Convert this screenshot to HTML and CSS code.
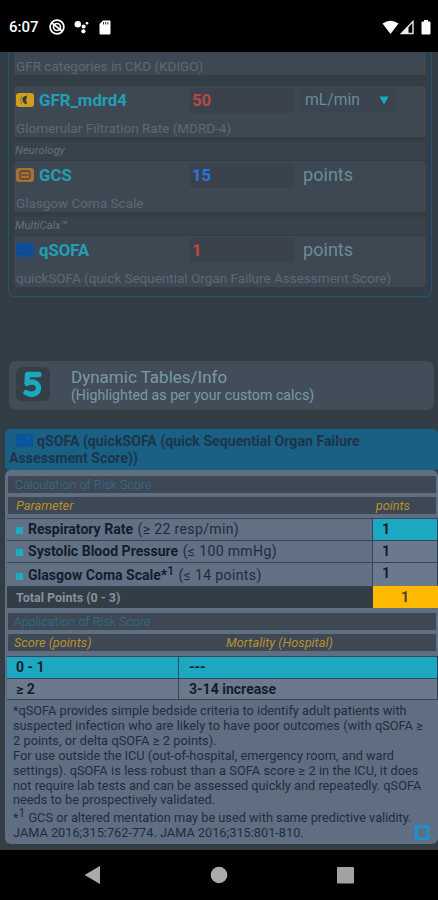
FILE: index.html
```html
<!DOCTYPE html>
<html lang="en">
<head>
<title>Custom Calcs</title>
<meta charset="UTF-8">
<meta name="viewport" content="width=device-width,initial-scale=1.0">
<link rel="stylesheet" href="styles.css">
</head>
<body>
<header class="status">
	<span class="time">6:07</span>
	<svg class="ico-sync" width="16" height="16" viewBox="0 0 16 16" fill="none" stroke="#fff"><circle cx="8" cy="8" r="6.9" stroke-width="1.7"/><circle cx="8" cy="8" r="3.5" stroke-width="1.7"/><path d="M3 4l10 8" stroke-width="1.7"/></svg>
	<svg class="ico-dots" width="15" height="14" viewBox="0 0 15 14" fill="#fff"><circle cx="3.8" cy="4.3" r="3.2"/><circle cx="9.6" cy="6.5" r="2"/><circle cx="9.4" cy="11.3" r="2.1"/><circle cx="13" cy="3.2" r="1.3"/></svg>
	<svg class="ico-sd" width="12" height="15" viewBox="0 0 12 15"><path d="M4 .5h6.5a1 1 0 0 1 1 1v12a1 1 0 0 1-1 1h-9a1 1 0 0 1-1-1V4z" fill="#fff"/><path d="M4.5 2v2.5M6.7 2v2.5M8.9 2v2.5" stroke="#333" stroke-width="1"/></svg>
	<span class="spacer"></span>
	<svg width="17" height="15" viewBox="0 0 17 15"><path d="M.5 3.5Q8.500-2 16.500 3.500L8.500 14z" fill="#fff"/></svg>
	<svg class="ico-cell" width="14" height="15" viewBox="0 0 14 15"><path d="M1.500 13.500L13 1.500v12z" fill="none" stroke="#ddd" stroke-width="1.500"/><path d="M.5 14L8.500 6v8z" fill="#eee"/></svg>
	<svg class="ico-batt" width="10" height="15" viewBox="0 0 10 15"><path d="M3 0h4v1.500h1.500a1 1 0 0 1 1 1V13.500a1 1 0 0 1-1 1h-7a1 1 0 0 1-1-1V2.500a1 1 0 0 1 1-1H3z" fill="#fff"/></svg>
</header>

<main>
	<section class="panel">
		<div class="card card-cut"><p class="desc">GFR categories in CKD (KDIGO)</p></div>
		<div class="card first">
			<div class="line">
				<svg class="badge" width="18" height="14" viewBox="0 0 18 14"><rect width="18" height="14" rx="3" fill="#cfa11b"/><path d="M5.500 3Q4 7 5.500 11" fill="none" stroke="#8a7430"/><path d="M12 2.500Q5.500 3 6.500 7Q7 11 12 11.500Q9.500 10 11 8.500L9.500 7L11 5.500Q9.500 4 12 2.500z" fill="#303a44"/></svg>
				<b class="name">GFR_mdrd4</b>
				<span class="value red">50</span>
				<span class="unit select"><span>mL/min</span><svg width="10" height="9" viewBox="0 0 10 9"><path d="M.5.500h9L5 8.500z" fill="#1ba9c0"/></svg></span>
			</div>
			<p class="desc">Glomerular Filtration Rate (MDRD-4)</p>
		</div>
		<h4 class="group">Neurology</h4>
		<div class="card">
			<div class="line">
				<svg class="badge" width="18" height="14" viewBox="0 0 18 14"><rect width="18" height="14" rx="3" fill="#a97031"/><rect x="4" y="3" width="10" height="8" rx="2.500" fill="#a97031" stroke="#4b4744" stroke-width="1.300"/><path d="M5.500 7h7" stroke="#4b4744" stroke-width="1.300"/></svg>
				<b class="name">GCS</b>
				<span class="value blue">15</span>
				<span class="unit">points</span>
			</div>
			<p class="desc">Glasgow Coma Scale</p>
		</div>
		<h4 class="group">MultiCalx™</h4>
		<div class="card">
			<div class="line">
				<svg class="badge" width="18" height="14" viewBox="0 0 18 14"><rect width="18" height="14" rx="2.500" fill="#0c4f9c"/><path d="M3 4l2 3 3-4M3 10h5l3-6M11 9q2 3 4-1V4h-3" fill="none" stroke="#1a437b"/></svg>
				<b class="name">qSOFA</b>
				<span class="value red">1</span>
				<span class="unit">points</span>
			</div>
			<p class="desc">quickSOFA (quick Sequential Organ Failure Assessment Score)</p>
		</div>
	</section>

	<section class="step">
		<div class="num"><svg width="20" height="27" viewBox="0 0 20 27"><path d="M16 3.500H4.500L4 12.500Q9.500 9.500 13.500 12.500Q17 16 14.500 20.500Q10 25.500 3 21.500" fill="none" stroke="#1ba9c0" stroke-width="5.300" stroke-linejoin="round" stroke-linecap="round"/></svg></div>
		<div class="step-text">
			<h2>Dynamic Tables/Info</h2>
			<p>(Highlighted as per your custom calcs)</p>
		</div>
	</section>

	<h3 class="title">
		<svg width="17" height="13" viewBox="0 0 17 13"><rect width="17" height="13" rx="2" fill="#09539f"/><path d="M3 4v5h5M10 4h4M9 9l3-4" fill="none" stroke="#12649f"/></svg>qSOFA (quickSOFA (quick Sequential Organ Failure<br>Assessment Score))
	</h3>

	<section class="info">
		<h5 class="strip">Calculation of Risk Score</h5>
		<div class="strip head"><span>Parameter</span><span class="col-pts">points</span></div>
		<div class="grid risk">
			<div class="cell"><i></i><b>Respiratory Rate</b> <span>(≥ 22 resp/min)</span></div><div class="cell pts hit">1</div>
			<div class="cell"><i></i><b>Systolic Blood Pressure</b> <span>(≤ 100 mmHg)</span></div><div class="cell pts">1</div>
			<div class="cell"><i></i><b>Glasgow Coma Scale*<sup>1</sup></b> <span>(≤ 14 points)</span></div><div class="cell pts">1</div>
			<div class="cell total">Total Points (0 - 3)</div><div class="cell sum">1</div>
		</div>
		<h5 class="strip app">Application of Risk Score</h5>
		<div class="strip head"><span class="col-score">Score (points)</span><span>Mortality (Hospital)</span></div>
		<div class="grid mort">
			<div class="cell hit">0 - 1</div><div class="cell hit">---</div>
			<div class="cell">≥ 2</div><div class="cell">3-14 increase</div>
		</div>
		<div class="notes">
			<p>*qSOFA provides simple bedside criteria to identify adult patients with</p>
			<p class="wide">suspected infection who are likely to have poor outcomes (with qSOFA ≥</p>
			<p class="wide">2 points, or delta qSOFA ≥ 2 points).</p>
			<p>For use outside the ICU (out-of-hospital, emergency room, and ward</p>
			<p class="wide">settings). qSOFA is less robust than a SOFA score ≥ 2 in the ICU, it does</p>
			<p>not require lab tests and can be assessed quickly and repeatedly. qSOFA</p>
			<p>needs to be prospectively validated.</p>
			<p class="foot">*<sup>1</sup> GCS or altered mentation may be used with same predictive validity.</p>
			<p>JAMA 2016;315:762-774. JAMA 2016;315:801-810.</p>
			<svg class="ref" width="18" height="15" viewBox="0 0 18 15"><path fill="#2090c8" fill-rule="evenodd" d="M3 0h12a2 2 0 0 1 2 2v2.500l-1 1v4l1 1V13a2 2 0 0 1-2 2H3a2 2 0 0 1-2-2v-2.500l1-1v-4l-1-1V2a2 2 0 0 1 2-2zM7 3L5 5v5l2 2.500h4.500L14 10l-1.500-2.500L14 5l-2.500-2z"/></svg>
		</div>
	</section>
</main>

<nav class="navbar">
	<svg width="17" height="20" viewBox="0 0 17 20"><path d="M.5 10L16 1v18z" fill="#aaa"/></svg>
	<svg width="18" height="18" viewBox="0 0 18 18"><circle cx="9" cy="9" r="8.300" fill="#aaa"/></svg>
	<svg width="17" height="17" viewBox="0 0 17 17"><rect width="17" height="16.500" rx="1" fill="#a2a2a2"/></svg>
</nav>
</body>
</html>
```
FILE: styles.css
```css
*{
  margin:0;
  padding:0;
  box-sizing:border-box;
}
body{
  width:438px;
  height:900px;
  overflow:hidden;
  background:#333d46;
  font-family:Roboto,"Liberation Sans",sans-serif;
  color:#1d2c3d;
  display:flex;
  flex-direction:column;
  white-space:nowrap;
}
svg{display:block;flex:none}

.status{
  height:52px;
  flex:none;
  background:#000;
  display:flex;
  align-items:center;
  padding:2px 7px 0 9px;
  color:#fff;
}
.time{width:40px;font-size:15px;font-weight:500}
.ico-dots{margin-left:9px}
.ico-sd{margin-left:10px}
.spacer{flex:1}
.ico-cell{margin-left:1px}
.ico-batt{margin-left:7px}

main{height:798px;flex:none;overflow:hidden}

.panel{
  height:245px;
  margin:0 6px 0 8px;
  padding:0 5px;
  border:solid #205672;
  border-width:0 1.5px 1.5px;
  border-radius:0 0 7px 7px;
}
.card{
  height:51px;
  background:#3e4853;
  border-radius:3px;
  padding-left:2px;
}
.card-cut{height:23px;padding-top:5px;border-radius:0 0 3px 3px}
.first{margin-top:11px}
.line{display:flex;height:28px;align-items:center}
.badge{margin-right:5px}
.name{
  width:146px;
  font-size:16.8px;
  color:#229fb5;
}
.value{
  width:106px;
  height:25px;
  margin-left:4px;
  padding-left:3px;
  border-radius:5px;
  background:#3a434d;
  font-size:16.7px;
  font-weight:700;
  line-height:26px;
}
.red{color:#bd4740}
.blue{color:#2874e0}
.unit{
  margin-left:8px;
  font-size:18.1px;
  line-height:22px;
  padding-bottom:1px;
  color:#6b8b98;
}
.select{
  width:98px;
  height:24px;
  margin-left:4px;
  padding:0 8px 0 6px;
  border-radius:8px;
  background:#3b454f;
  font-size:15.7px;
  display:flex;
  align-items:center;
  justify-content:space-between;
}
.desc{
  font-size:13.5px;
  line-height:18px;
  color:#5c6975;
}
.line + .desc{margin-top:5px}
.group{
  height:18px;
  margin:5px 0 1px;
  padding-left:1px;
  border-radius:3px;
  background:#38424c;
  font-size:11.3px;
  font-weight:400;
  font-style:italic;
  line-height:18px;
  color:#63717d;
}

.step{
  height:49px;
  margin:64px 4px 0 9px;
  padding:6px 7px;
  border-radius:7px;
  background:#434d59;
  display:flex;
}
.num{
  width:34px;
  height:34px;
  border-radius:6px;
  background:#343f48;
  display:flex;
  align-items:center;
  justify-content:center;
}
.step-text{margin-left:21px;color:#789aa6}
.step h2{font-size:17px;font-weight:400;line-height:20px}
.step p{font-size:14.2px;line-height:16px}

.title{
  height:41px;
  margin:19px 0 0 5px;
  padding:4px 0 0 4px;
  border-radius:5px 5px 2px 4px;
  background:#196084;
  font-size:14.15px;
  font-weight:700;
  line-height:17px;
  color:#1e3448;
}
.title svg{display:inline-block;vertical-align:-1px;margin:0 4px 0 7px}

.info{
  height:374px;
  margin:0 0 0 5px;
  padding-top:6px;
  border-radius:6px;
  background:#5f6e81;
}
.strip{
  height:17px;
  margin:0 2px 4px 3px;
  padding-left:7px;
  background:#3e4854;
  font-size:12.55px;
  font-weight:300;
  line-height:17px;
  color:#2f7193;
}
.head{
  padding-left:8px;
  color:#b98f2e;
  font-size:12.75px;
  font-weight:400;
  font-style:italic;
  display:flex;
}
.col-pts{margin-left:auto;padding-right:26px}
.col-score{width:212px;margin-left:-2px}
.app{margin-top:5px;padding-left:6px}
.grid{
  display:grid;
  margin:0 0 0 2px;
  font-size:14.05px;
}
.risk{grid-template-columns:366px 1fr;grid-template-rows:22px 22px 24px 22px}
.mort{grid-template-columns:172px 1fr;grid-template-rows:22px 21px;margin-top:5px}
.cell{
  border-top:1px solid #35465a;
  border-right:1px solid #35465a;
  background:#617083;
  padding-left:9px;
  line-height:21px;
}
.cell i{
  display:inline-block;
  width:7px;
  height:7px;
  margin-right:5px;
  background:#20a9c5;
}
.cell span{margin-left:1px;letter-spacing:.35px}
.cell b,.pts,.mort{font-weight:700;color:#121d2c}
.cell sup,.notes sup{font-size:12px;line-height:0;vertical-align:5px}
.cell sup{font-weight:500}
.risk .cell:nth-child(5){line-height:24px}
.pts{background:#6b798d}
.mort .cell{background:#6b798d}
.mort .cell:nth-child(even){padding-left:10px}
.hit,.mort .hit{background:#1ba8c0}
.risk .total{
  background:#323d47;
  border-right:0;
  color:#87929c;
  font-size:12.5px;
  font-weight:700;
}
.risk .sum{
  background:#ffb900;
  border-color:#ffb900;
  color:#4a4428;
  font-weight:700;
  padding-left:28px;
}
.notes{
  position:relative;
  border-top:1px solid #35465a;
  margin-left:2px;
  padding:4px 0 0 6px;
  font-size:12.75px;
  line-height:14.9px;
  color:#1e2d3f;
}
.wide{word-spacing:.25px}
.foot{margin-top:3px}
.ref{position:absolute;right:7px;bottom:1px}

.navbar{
  height:50px;
  flex:none;
  background:#000;
  display:flex;
  align-items:center;
  justify-content:space-between;
  padding:0 84px;
}
```
